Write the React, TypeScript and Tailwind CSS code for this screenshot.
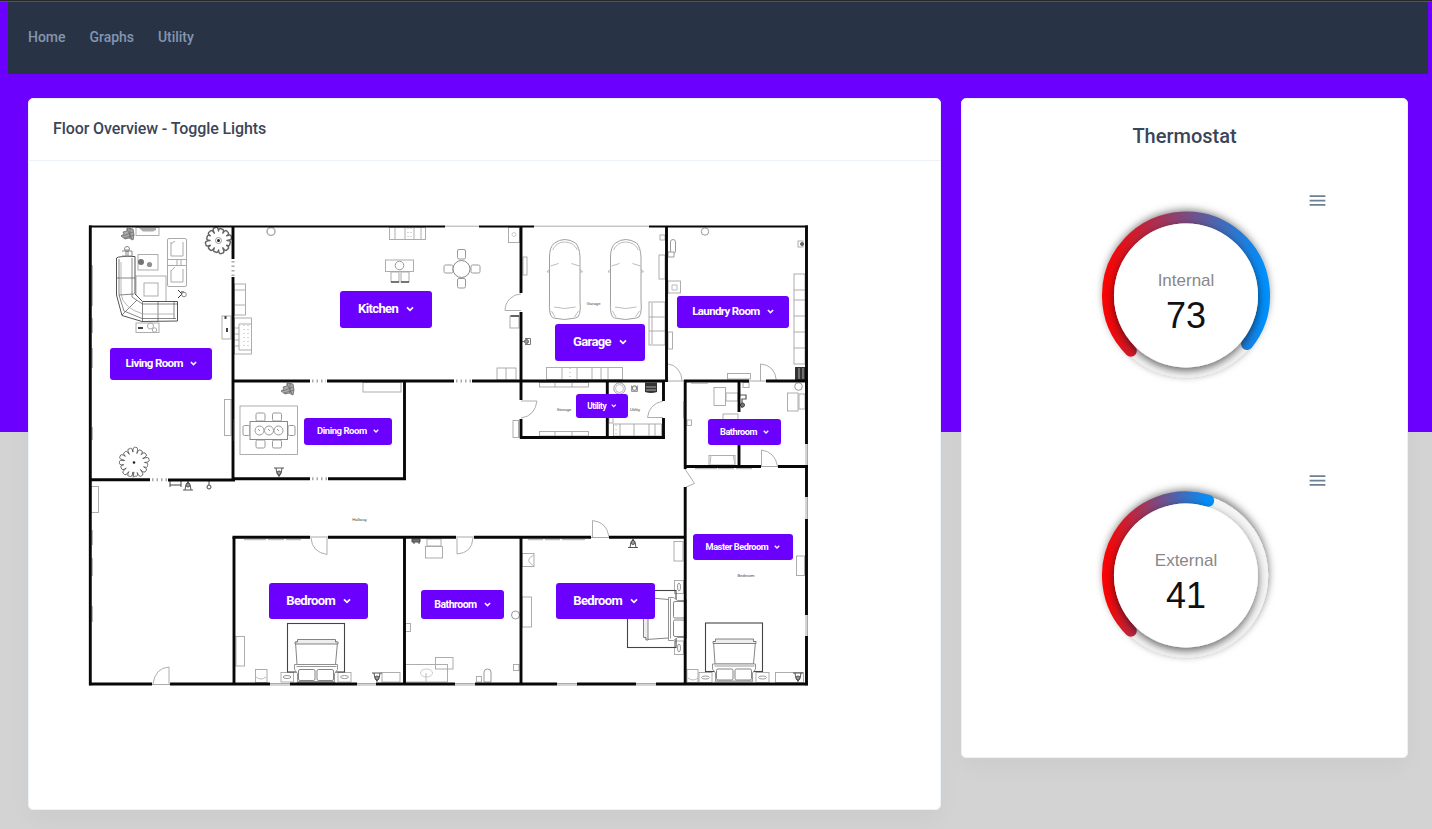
import React from "react";

type Box = [number, number, number, number];

const wallPaths = [
  "M90.3 225.5V685.3",
  "M806.5 225.5V444M806.5 465V497M806.5 519V615M806.5 636V685.3",
  "M89 684H152M170 684H270M290 684H357M376 684H455M475 684H557M577 684H636M656 684H808",
  "M233 226V259M233 277V481",
  "M233 381H310M327 381H454M472 381H665M684 381H749M766 381H808",
  "M521 226V293M521 312V400M521 419V438.5",
  "M666.5 226V382",
  "M89 479.8H150M168 480H235M233 478.7H310M328 478.7H406",
  "M404.5 381V480",
  "M520 437.5H665M607.3 381V438M663.5 381V401M663.5 418V438",
  "M685.2 380V469M685.2 487V685",
  "M684 466.5H761M778 466.5H808M739 381V412M739 440V468",
  "M232.5 537.3H310M328 537.3H456M474 537.3H591M609 537.3H686",
  "M234 537V684M404.5 537V684M521 537V684",
];

const windows = [
  "M445 226.2H479M534 226.2H649",
  "M270 683.5H290M270 685H290M357 683.5H376M357 685H376M455 683.5H475M455 685H475M557 683.5H577M557 685H577M636 683.5H656M636 685H656M152 684.5H170",
  "M806 444V465M807.5 444V465M806 497V519M807.5 497V519M806 615V636M807.5 615V636",
  "M665 381H684M310 537H328M456 537H474M591 537.5H609M749 381H766M761 466.5H778",
];

const lightBoxes: Box[] = [
  [136, 227.5, 23, 8], [138, 254.5, 20, 15.5], [136, 323, 23, 9.5],
  [136, 276, 30, 27], [144, 283, 14, 13],
  [222, 316, 9, 23], [234.5, 284, 11, 31], [234.5, 318, 17, 36],
  [224.5, 399.5, 6.5, 36], [91, 486.5, 7.5, 26],
  [389.5, 227.5, 36, 12], [385.5, 260, 28, 11.5], [391, 272, 8, 10], [401, 272, 8, 10],
  [508.5, 227.5, 11, 15], [523, 257, 4, 18], [510, 316, 9, 12], [497, 368, 19, 12],
  [660, 235, 5, 5], [659, 255, 6, 24], [649, 302, 16, 43],
  [546.5, 367.5, 76, 12],
  [668, 281, 12.5, 12], [668, 332, 4.5, 17], [727.5, 373.5, 23, 5.5],
  [794, 274, 11, 90], [798, 241, 5, 6],
  [363, 382.5, 38, 9.5], [240, 406, 57.5, 48.5],
  [539.5, 382.5, 49, 4.5], [539.5, 431.5, 49, 4.5], [513, 420.5, 5.5, 17],
  [613.5, 424, 48, 12], [609, 415, 4, 8],
  [714, 387.5, 11.5, 18], [726, 393, 12, 8], [723, 414, 15, 8], [687, 420, 4.5, 5.5],
  [787.5, 393, 10.5, 18], [799, 394, 6, 15], [709, 455.5, 26, 9.5], [743, 382.5, 6, 5],
  [796.5, 556, 8, 19.5], [674, 541.5, 9, 19.5], [522, 553.5, 12, 13], [522, 597, 9.5, 30],
  [236, 636.5, 8.5, 29.5], [255.5, 669.5, 11.5, 13], [281, 672.5, 12.5, 9.5], [338, 672.5, 13, 9.5], [382, 672.5, 18, 9.5],
  [425.5, 546.5, 17, 11.5], [427, 539, 14, 7], [405.5, 623.5, 5, 8], [513.5, 664.5, 5.5, 6],
  [405.5, 664.5, 42, 17.5], [435.5, 657.5, 17.5, 11.5], [476.5, 676.5, 5, 5.5],
  [687, 669.5, 11, 13], [699, 672.5, 13, 10], [756, 672.5, 13, 10], [775.5, 672.5, 28, 10],
  [674.5, 580.5, 9, 13], [674.5, 641, 9, 13.5],
];

const doors = [
  "M521 294A16 17 0 0 0 505 310.5H521",
  "M668 364A15 17 0 0 1 682 381",
  "M760.5 381V364Q775 365 776.5 381",
  "M521 401H537Q535 416 521 418",
  "M663 401Q649 404 647.5 417.5H663",
  "M761.5 466V450Q775 452 777.5 466",
  "M685 469L694.5 483.5L686 487",
  "M592.5 537V520.5Q607 522 609 537",
  "M311 538Q312 552 327 554.5V538",
  "M457 538V554Q472 553 473 538",
  "M153 684Q155 668 169 667V684",
];

function Bed({ x, y, turn = 0 }: { x: number; y: number; turn?: number }) {
  return (
    <g transform={`translate(${x} ${y}) rotate(${turn})`} fill="none">
      <rect x="0" y="0" width="57" height="48.5" stroke="#444" strokeWidth="1.1" />
      <path d="M8 18.5H50L48 41H9.5Z" fill="#fff" stroke="#777" strokeWidth=".9" />
      <path d="M10 16H48V18.5H50.500V20.500H7.500V18.5H10Z" fill="#eee" stroke="#666" strokeWidth=".8" />
      <path d="M7 41H50V46L47 50V58H10V50L7 46Z" fill="#fff" stroke="#888" strokeWidth=".9" />
      <rect x="11" y="46" width="16.5" height="11" rx="1.5" fill="#fff" stroke="#777" strokeWidth=".9" />
      <rect x="29.5" y="46" width="16.5" height="11" rx="1.5" fill="#fff" stroke="#777" strokeWidth=".9" />
      <path d="M9 43H49M9 59H48" stroke="#999" />
    </g>
  );
}

function Car({ x }: { x: number }) {
  return (
    <g transform={`translate(${x} 0)`} fill="none" stroke="#a0a0a0">
      <path d="M6 243Q16 236 27 243Q31 247 31.500 257V300Q33 318 27 318Q16 321 5 318Q0 317 1 300V257Q1 247 6 243Z" />
      <path d="M4 250Q8 242 16 242Q25 242 29 250M2 266L10 263.500M31 266L23 263.500M5.500 307Q16 310 27 307M3 311L6.500 317M30 311L26 317M1 269L-1.500 272H1M31.500 269L34 272H31.500" strokeWidth=".7" />
    </g>
  );
}

function Shrub({ x, y }: { x: number; y: number }) {
  return (
    <g transform={`translate(${x} ${y})`}>
      <path d="M-1 -6L5 -5L6 1L5 6L1 4L-3 5L-7 2L-4 0L-5 -2L-1 -3Z" fill="#aaa" stroke="#666" strokeWidth=".8" />
      <path d="M-5 2L5 -2M-1 -5L4 5M-4 4L6 1M2 -6V4" stroke="#666" strokeWidth=".7" />
    </g>
  );
}

function Fixture({ x, y, flip = false }: { x: number; y: number; flip?: boolean }) {
  return (
    <g transform={`translate(${x} ${y}) scale(1 ${flip ? -1 : 1})`} fill="none" stroke="#444" strokeWidth=".9">
      <path d="M-5 -4H5M-3 -4Q-3 1 0 4Q3 1 3 -4M0 0V5" />
      <circle r="2" fill="#999" cy="1" />
    </g>
  );
}

const chairSpots: Box[] = [
  [256, 413, 9, 8], [272.5, 413, 9, 8], [256, 440, 9, 8], [272.5, 440, 9, 8],
  [243, 425.5, 7, 10], [288, 425.5, 7, 10],
  [457.5, 249.5, 8, 9.5], [457.5, 278.5, 8, 9.5], [444, 265, 9, 8], [471, 265, 9, 8],
];

function leafOutline(cx: number, cy: number, inner: number, outer: number, lobes: number) {
  const at = (radius: number, step: number) => {
    const angle = (step * Math.PI) / lobes;
    return `${(cx + radius * Math.cos(angle)).toFixed(1)} ${(cy + radius * Math.sin(angle)).toFixed(1)}`;
  };
  let path = `M${at(inner, 0)}`;
  for (let i = 0; i < lobes; i++) {
    const tip = outer + (i % 3) * 0.7;
    path += `Q${at(tip, i * 2 + 0.1)} ${at(tip - 1.2, i * 2 + 1)}Q${at(tip, i * 2 + 1.9)} ${at(inner - (i % 2), i * 2 + 2)}`;
  }
  return `${path}Z`;
}

function FloorPlan() {
  return (
    <svg className="block h-[480px] w-[740px]" viewBox="80 215 740 480" aria-label="Floor plan">
      <g stroke="#a5a5a5" fill="none" strokeWidth=".9">
        {lightBoxes.map(([x, y, w, h]) => (
          <rect key={`${x}-${y}`} x={x} y={y} width={w} height={h} />
        ))}
        {doors.map((d) => <path key={d} d={d} />)}
        <path d="M395 228V239M405 228V239M414 228V239M421 228V239M506 368V380M562 368V380M577 368V380M592 368V380M601 368V380M608 368V380M794 290H805M794 300H805M794 316H805M794 332H805M794 348H805M234 290H245M234 305H245M649 317H665M649 331H665M652 303V344M239 324V350M239 324H251M239 350H251M234 328H239M234 334H239M234 340H239M234 346H239M555 383V387M572 383V387M555 432V436M572 432V436M620 424V436M634 424V436M649 424V436M655 424V436" />
        <path d="M244 325V349M248 325V349M408 228V239M411 228V239M616 425V436M570 368V380" strokeDasharray="1 3" />
      </g>

      <g stroke="#555" fill="#fff">
        <path d="M116.500 258Q118 256 135 256.500V294L142.500 301.500H177.500V321L142 321.500L122 315.500L116.500 295Z" />
        <path d="M119 259V295L124 311L142 318.500H176M132 258V297L142.500 304H177M116.500 278H135M158 302V322M142.500 302V321M122 315L137 300M119 295L134 294M174 302V319" strokeWidth=".7" fill="none" />
        <path d="M121 262V294Q123 308 143 314H174" stroke="#999" strokeWidth=".7" fill="none" />
      </g>
      <g stroke="#aaa" fill="none">
        <rect x="167.500" y="238.500" width="19" height="48" rx="1.500" />
        <path d="M167 259.500H187M167 265.500H187M171 242V256H183V242M171 270V282H183V269M177 260V265M181 260V265M171 244L175 241M171 271L175 267" />
        <circle cx="150.500" cy="326" r="3" /><circle cx="154.500" cy="330" r="2.200" />
      </g>
      <g fill="#444">
        <rect x="138" y="327" width="5" height="2" /><circle cx="141" cy="262" r="3" opacity=".75" />
        <circle cx="149.500" cy="264.500" r="2.600" opacity=".6" /><rect x="224.500" y="316" width="2" height="3" /><rect x="226" y="328" width="2" height="4" />
        <path d="M139 228H156V230L153 231.500H143Z" opacity=".45" />
      </g>
      <g fill="none" stroke="#888">
        <circle cx="127" cy="249" r="2.500" /><path d="M122 251H132V256H122M126 249V256M128 249V256" />
        <path d="M178 290L182 294L178 298M181 292H184" stroke="#333" /><circle cx="184" cy="294.500" r="2.300" />
      </g>

      <g fill="none" stroke="#666">
        <path d={leafOutline(218.5, 240.5, 9.5, 13, 12)} strokeWidth="1.500" strokeLinejoin="round" />
        <circle cx="218.500" cy="240.500" r="3" stroke="#999" /><circle cx="218.500" cy="240.500" r="1.500" fill="#222" stroke="none" />
        <path d={leafOutline(134, 462.5, 10.5, 15, 15)} stroke="#555" strokeWidth=".9" strokeLinejoin="round" />
        <path d="M133 477.500L134 472" /><circle cx="134" cy="462.500" r="1.300" fill="#222" stroke="none" />
      </g>

      <g fill="#fff" stroke="#999">
        {chairSpots.map(([x, y, w, h]) => <rect key={`${x}-${y}`} x={x} y={y} width={w} height={h} rx="1.500" />)}
        <rect x="250" y="421.500" width="37.500" height="18" stroke="#888" />
        <circle cx="259.500" cy="430.500" r="4.500" /><circle cx="269" cy="430.500" r="4.500" /><circle cx="278.500" cy="430.500" r="4.500" />
        <path d="M258 429L260 431M268 429L270 431M277 429L279 431" />
        <circle cx="461.500" cy="269" r="8.500" stroke="#888" />
        <circle cx="399.500" cy="265.500" r="4.300" /><circle cx="271" cy="231.500" r="4" stroke="#aaa" strokeWidth="1.500" />
        <circle cx="705" cy="231.500" r="3.700" /><circle cx="514" cy="234.500" r="2" stroke="#ccc" />
        <circle cx="619.500" cy="388.500" r="5.700" /><circle cx="619.500" cy="388.500" r="4" stroke="#bbb" />
        <circle cx="798.500" cy="386.500" r="3.800" /><circle cx="515.500" cy="615" r="4" />
        <rect x="670.500" y="239.500" width="5" height="14" rx="2.500" /><path d="M668 252H674V257H668Z" />
        <path d="M484 682V672Q484 669 487.500 669Q491 669 491 672V682Z" /><ellipse cx="426.500" cy="673" rx="6" ry="4" stroke="#ccc" /><path d="M426 673V682" stroke="#bbb" />
        <ellipse cx="287" cy="677" rx="4" ry="1.500" /><ellipse cx="344.500" cy="677" rx="4" ry="1.500" /><ellipse cx="705.500" cy="677.500" rx="4" ry="1.500" /><ellipse cx="762.500" cy="677.500" rx="4" ry="1.500" />
        <ellipse cx="679" cy="587" rx="1.500" ry="4" /><ellipse cx="679" cy="648" rx="1.500" ry="4" />
        <path d="M391 282H399M401 282H409" stroke="#555" strokeWidth="1.500" />
        <path d="M672 285H677V290H672ZM256 677Q261 681 266 677M534 555Q523 560 534 566M688 678Q693 682 698 678M711 455L710 464M733 455L735 464M632 387H637V391H632Z" fill="none" stroke="#bbb" />
      </g>
      <Car x={548.500} />
      <Car x={609.500} />
      <Bed x={287.500} y={623.500} />
      <Bed x={705.500} y={623} />
      <Bed x={627.500} y={647.500} turn={-90} />

      <Shrub x={128} y={234} />
      <Shrub x={288} y={389} />
      <Fixture x={279} y={472} />
      <Fixture x={188} y={486} flip />
      <Fixture x={633} y={543.500} flip />
      <Fixture x={377} y={677} />
      <Fixture x={798} y={677} />
      <g fill="none" stroke="#444">
        <path d="M170 481V487M181 481V487M170 485H181M209 481V485M414 540V544M419 540V544" />
        <circle cx="209" cy="487" r="2" />
        <path d="M412 539H420V542H412Z" fill="#777" />
        <circle cx="526.500" cy="341.500" r="2" fill="#999" stroke="#666" /><path d="M521 341.500H525M525 338.500H530.500V344.500H525" stroke="#777" />
        <circle cx="802" cy="244" r="1.500" fill="#666" stroke="#666" /><circle cx="634.500" cy="388" r="2.300" stroke="#777" />
        <path d="M631.500 385.500V391.500H637.500V385.500" stroke="#999" />
        <path d="M740 395H746V399H742V408" stroke="#555" strokeWidth="1.200" /><circle cx="742.500" cy="405" r="2" fill="#777" />
        <path d="M510.500 316H519" strokeWidth="1.600" />
      </g>
      <path d="M645 382.500H657V392Q651 394 645 392ZM795 367H806V380H795Z" fill="#333" />
      <path d="M646 387H656M646 390H656M799 368V379M803 368V379" stroke="#aaa" />

      <g fill="none" stroke="#aaa" strokeWidth="1">{windows.map((d) => <path key={d} d={d} />)}</g>
      <g fill="none" stroke="#aaa" strokeWidth="3" strokeDasharray="1.500 3">
        <path d="M312 381H326M456 381H471M152 479.800H167M312 478.700H327M233 261V276" />
      </g>
      <g stroke="#080808" fill="none" strokeWidth="2.900">{wallPaths.map((d) => <path key={d} d={d} />)}</g>
      <path d="M89 226.500H445M479 226.500H534M649 226.500H808" stroke="#080808" strokeWidth="1.900" />
      <path d="M92 265V306M92 318V333M92 348V368M92 427V440M92 530V545M92 558V576M92 606V622M233.500 419V441M684 401V418" stroke="#333" strokeWidth=".7" />
      <path d="M244 539.700H266M268 539.700H284M286 539.700H301M528 539.700H543M545 539.700H560M562 539.700H585M695 468.700H717M718 468.700H734M736 468.700H752M691 383.200H708" stroke="#888" strokeWidth=".7" />
      <g fill="#444" fontFamily="Liberation Sans, Arial, sans-serif" fontSize="4.200" textAnchor="middle">
        <text x="593.500" y="305">Garage</text><text x="564" y="411">Storage</text><text x="635" y="411">Utility</text>
        <text x="359.500" y="521">Hallway</text><text x="746" y="577">Bedroom</text>
      </g>
    </svg>
  );
}

const rooms = [
  { name: "Living Room", box: "left-[82.3px] top-[248.600px] h-[32px] w-[101.700px]", type: "text-[11.500px] gap-[7px] tracking-[-0.055em]", icon: 7 },
  { name: "Kitchen", box: "left-[312.300px] top-[191.700px] h-[37px] w-[91.700px]", type: "text-[13px] gap-[8px] tracking-[-0.048em]", icon: 8 },
  { name: "Garage", box: "left-[527.300px] top-[224.700px] h-[37px] w-[89.300px]", type: "text-[13px] gap-[8px] tracking-[-0.048em]", icon: 8 },
  { name: "Laundry Room", box: "left-[649.300px] top-[196.500px] h-[32px] w-[111.300px]", type: "text-[11.500px] gap-[7px] tracking-[-0.055em]", icon: 7 },
  { name: "Dining Room", box: "left-[276px] top-[318.500px] h-[27px] w-[87.700px]", type: "text-[9.500px] gap-[6px] tracking-[-0.048em]", icon: 6 },
  { name: "Utility", box: "left-[548px] top-[295px] h-[24.300px] w-[52px]", type: "text-[8.300px] gap-[5px] tracking-[-0.048em]", icon: 5.5 },
  { name: "Bathroom", box: "left-[680px] top-[319.500px] h-[26px] w-[73px]", type: "text-[9.200px] gap-[6px] tracking-[-0.048em]", icon: 6 },
  { name: "Master Bedroom", box: "left-[665.300px] top-[435.200px] h-[26.300px] w-[99.300px]", type: "text-[9.200px] gap-[6px] tracking-[-0.048em]", icon: 6 },
  { name: "Bedroom", box: "left-[240.800px] top-[483.700px] h-[36.700px] w-[99.700px]", type: "text-[13px] gap-[8px] tracking-[-0.048em]", icon: 8 },
  { name: "Bathroom", box: "left-[393px] top-[491px] h-[29.300px] w-[83px]", type: "text-[10.500px] gap-[7px] tracking-[-0.048em]", icon: 7 },
  { name: "Bedroom", box: "left-[527.800px] top-[483.700px] h-[36.500px] w-[99.700px]", type: "text-[13px] gap-[8px] tracking-[-0.048em]", icon: 8 },
];

function polar(angle: number) {
  const a = (angle * Math.PI) / 180;
  return `${100 + 78 * Math.sin(a)} ${100 - 78 * Math.cos(a)}`;
}

function Gauge({ label, value, sweep }: { label: string; value: number; sweep: number }) {
  const id = label.toLowerCase();
  return (
    <div className="flex h-[280px] justify-end pr-[79px]">
      <svg className="mt-[6px] h-[200px] w-[200px]" viewBox="0 0 200 200">
        <defs>
          <linearGradient id={`${id}-heat`}>
            <stop offset="0" stopColor="#f80505" />
            <stop offset="1" stopColor="#008ffb" />
          </linearGradient>
          <filter id={`${id}-track`} x="-20%" y="-20%" width="140%" height="140%">
            <feDropShadow dx="0" dy="-3" stdDeviation="4" floodColor="#000" floodOpacity=".55" />
          </filter>
          <filter id={`${id}-hollow`} x="-20%" y="-20%" width="140%" height="140%">
            <feDropShadow dx="0" dy="3" stdDeviation="4" floodColor="#000" floodOpacity=".6" />
          </filter>
        </defs>
        <circle cx="100" cy="99.500" r="82.200" fill="#f5f5f5" filter={`url(#${id}-track)`} />
        <path transform="translate(0 -.5)" d={`M${polar(-135)}A78 78 0 ${sweep > 180 ? 1 : 0} 1 ${polar(sweep - 135)}`} fill="none" stroke={`url(#${id}-heat)`} strokeWidth="12" strokeLinecap="round" />
        <circle cx="100" cy="99.500" r="72" fill="#fff" filter={`url(#${id}-hollow)`} />
        <g fontFamily="Liberation Sans, Arial, sans-serif" textAnchor="middle">
          <text x="100" y="90" fontSize="17" fill="#888">{label}</text>
          <text x="100" y="132" fontSize="36" fill="#111">{value}</text>
        </g>
      </svg>
      <button className="ml-[21px] h-[21px]" aria-label={`${label} menu`}>
        <svg className="block h-[21px] w-[21px]" viewBox="0 0 24 24" fill="#6e8192">
          <path d="M3 18h18v-2H3v2zm0-5h18v-2H3v2zm0-7v2h18V6H3z" />
        </svg>
      </button>
    </div>
  );
}

const cardStyle = "shrink-0 rounded-[5px] border border-[#edf2f9] bg-white shadow-[0_12px_24px_rgba(18,38,63,0.03)]";

export default function App() {
  return (
    <div className="h-[829px] w-[1432px] overflow-hidden bg-[linear-gradient(#6c00ff_0_432px,#d3d3d3_432px)] font-['Roboto',sans-serif]">
      <div className="h-[2px] border-b border-[#555] bg-[#282828]" />
      <nav className="ml-2 flex h-[72px] w-[1420px] gap-6 bg-[#283445] px-5 pt-[25px] text-[14px] font-medium leading-[21px] tracking-[-0.03px] text-[#8495b0]">
        <a>Home</a>
        <a>Graphs</a>
        <a>Utility</a>
      </nav>
      <main className="flex items-start gap-5 px-7 pt-6">
        <section className={`h-[712px] w-[913px] ${cardStyle}`}>
          <h1 className="h-[62px] border-b border-[#edf2f9] px-6 pt-[18px] text-[16px] font-medium leading-6 tracking-[-0.1px] text-[#3b4559]">Floor Overview - Toggle Lights</h1>
          <div className="relative -mt-[62px] ml-[-1px] pl-[52px] pt-[116px]">
            <FloorPlan />
            {rooms.map((room, index) => (
              <button key={index} className={`absolute flex items-center justify-center whitespace-nowrap rounded-[3px] bg-[#6c00ff] font-bold text-white ${room.box} ${room.type}`}>
                {room.name}
                <svg width={room.icon} height={room.icon} viewBox="0 0 8 8" fill="none" stroke="currentColor" strokeWidth="1.700">
                  <path d="M1 2.300L4 5.300L7 2.300" />
                </svg>
              </button>
            ))}
          </div>
        </section>
        <section className={`h-[660px] w-[447px] ${cardStyle}`}>
          <h2 className="h-[91px] pt-[22px] text-center text-[20px] font-medium leading-[30px] text-[#3b4559]">Thermostat</h2>
          <Gauge label="Internal" value={73} sweep={263.5} />
          <Gauge label="External" value={41} sweep={151.5} />
        </section>
      </main>
    </div>
  );
}
